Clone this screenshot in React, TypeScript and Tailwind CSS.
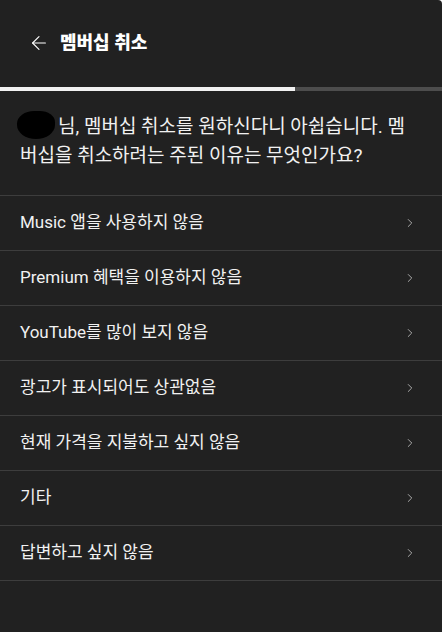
import { ArrowLeft, ChevronRight } from "lucide-react";

const reasons = [
  "Music 앱을 사용하지 않음",
  "Premium 혜택을 이용하지 않음",
  "YouTube를 많이 보지 않음",
  "광고가 표시되어도 상관없음",
  "현재 가격을 지불하고 싶지 않음",
  "기타",
  "답변하고 싶지 않음",
];

export default function App() {
  return (
    <div
      className="w-[442px] h-[632px] bg-[#212121] text-[#f1f1f1] rounded-tr-[4px] overflow-hidden"
      style={{ fontFamily: 'Roboto, "Noto Sans CJK KR", sans-serif' }}
    >
      {/* header */}
      <div className="h-[87px] flex items-center pl-[28px] pb-[2px]">
        <ArrowLeft size={22} strokeWidth={1.2} className="text-white" />
        <h1 className="ml-[10px] text-[18px] font-extrabold text-white">멤버십 취소</h1>
      </div>

      {/* progress */}
      <div className="h-[4px] flex">
        <div className="w-[295px] bg-[#f1f1f1]" />
        <div className="flex-1 bg-[#4d4d4d]" />
      </div>

      <p className="pl-[20px] pr-[30px] pt-[20px] pb-[25px] text-[19px] leading-[29px] break-all">
        <span className="inline-block align-[-6px] w-[38px] h-[28px] mr-[3px] -ml-[3px] bg-black rounded-[45%_40%_50%_50%]" />
        님, 멤버십 취소를 원하신다니 아쉽습니다. 멤버십을 취소하려는 주된 이유는 무엇인가요?
      </p>

      <ul className="border-t border-[#3d3d3d]">
        {reasons.map((r) => (
          <li
            key={r}
            className="h-[55px] flex items-center justify-between pl-[20px] pr-[25px] border-b border-[#3d3d3d]"
          >
            <span className="text-[17px]">{r}</span>
            <ChevronRight size={14} strokeWidth={1.3} className="text-[#d0d0d0]" />
          </li>
        ))}
      </ul>
    </div>
  );
}
